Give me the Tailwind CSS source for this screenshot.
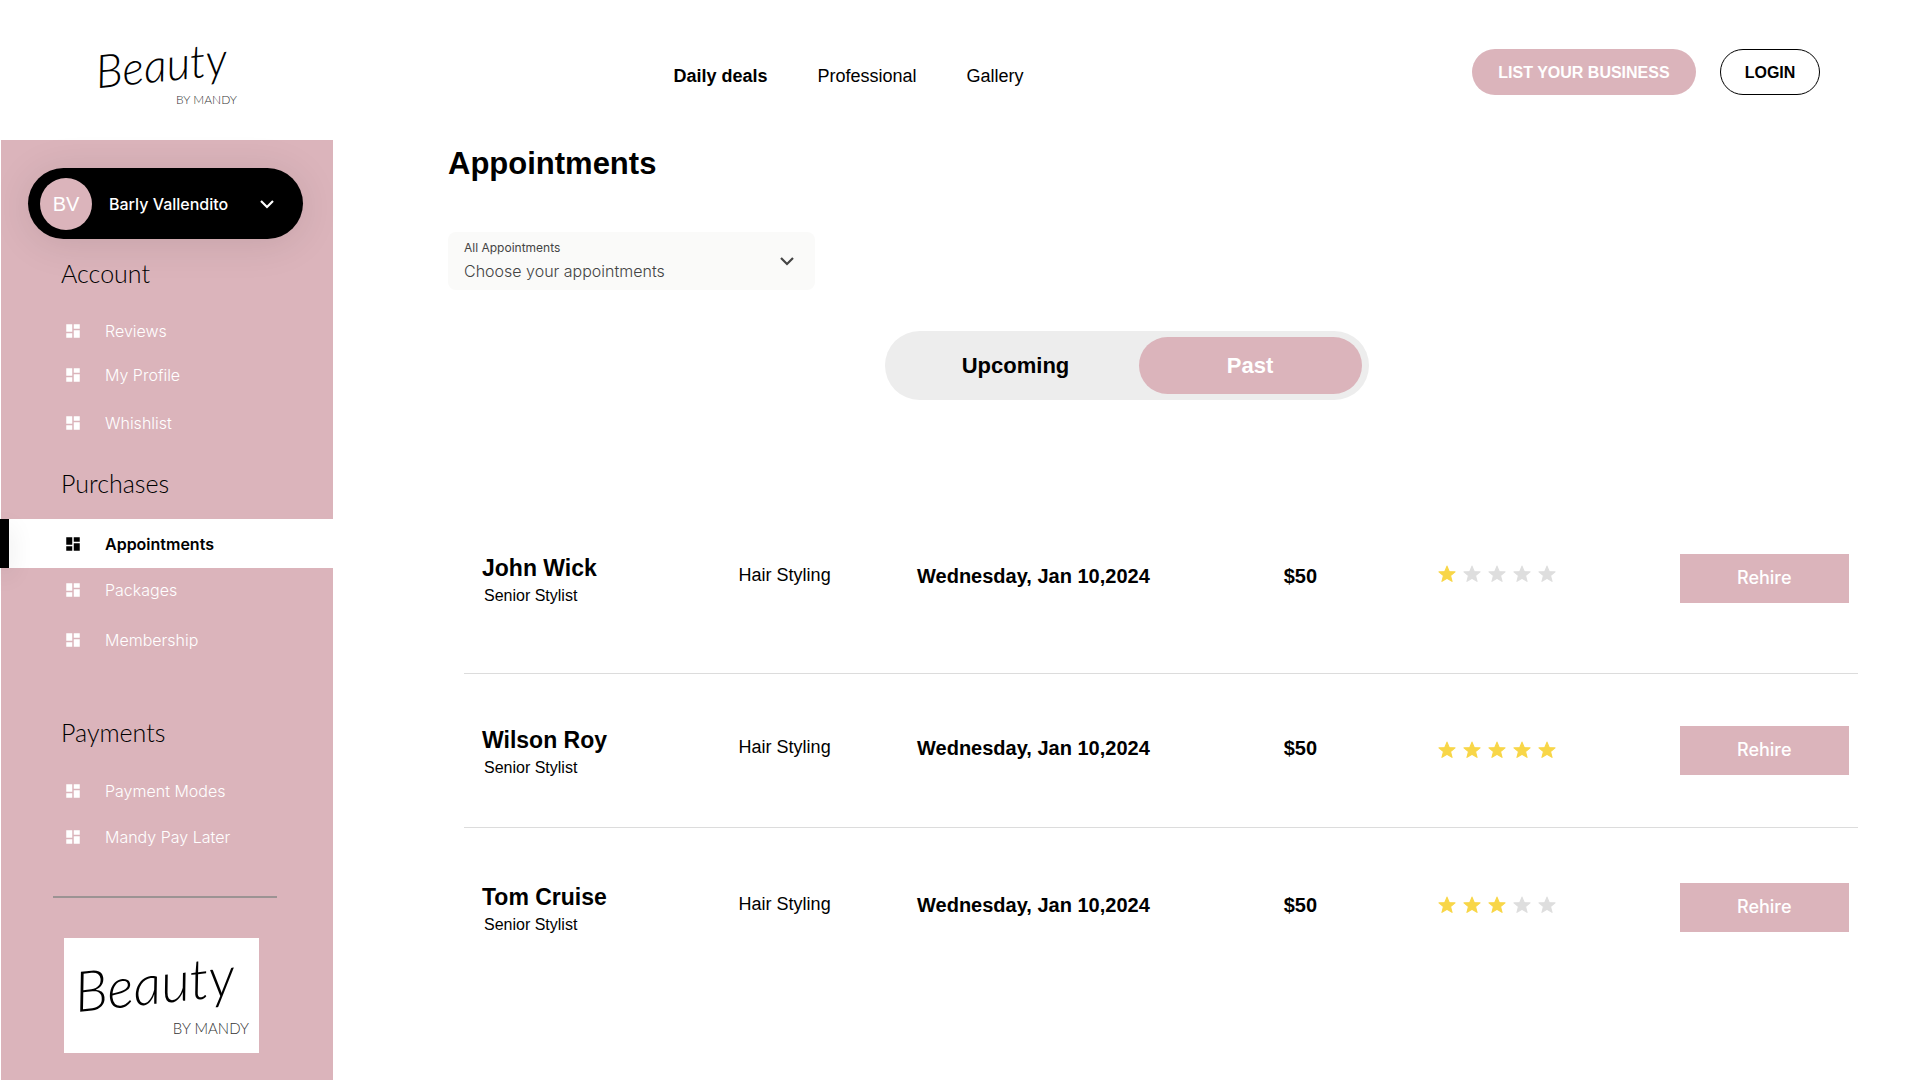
<!DOCTYPE html>
<html lang="en">
<head>
    <meta charset="UTF-8">
    <meta name="viewport" content="width=device-width, initial-scale=1.0">
    <title>Beauty by Mandy - Appointments</title>
    <script src="https://cdn.jsdelivr.net/npm/@tailwindcss/browser@4"></script>
</head>
<body class="min-h-screen flex flex-col bg-white text-black font-['Liberation_Sans',Arial,sans-serif]">
    <!-- Shared icons -->
    <svg class="hidden">
        <symbol id="icon-dashboard" viewBox="0 0 24 24"><path fill="currentColor" d="M3 13h8V3H3v10zm0 8h8v-6H3v6zm10 0h8V11h-8v10zm0-18v6h8V3h-8z"/></symbol>
        <symbol id="icon-chevron" viewBox="0 0 16 16"><path fill="none" stroke="currentColor" stroke-width="2.2" d="M2 5l6 6 6-6"/></symbol>
        <symbol id="icon-star" viewBox="0 0 24 24"><path fill="currentColor" stroke="currentColor" stroke-width="1.5" stroke-linejoin="round" d="M12 1.5l2.9 7.2 7.8.5-6 5 2 7.6L12 17.6l-6.7 4.2 2-7.6-6-5 7.8-.5z"/></symbol>
    </svg>

    <header class="h-[140px] grid grid-cols-[37%_1fr_auto] items-center pr-[100px]">
        <a href="#" class="ml-[95px] w-[142px] flex flex-col">
            <span class="-rotate-6 font-['Lato',cursive] italic font-light text-[46px] leading-[60px]">Beauty</span>
            <span class="self-end font-['Lato',sans-serif] font-light text-xs leading-3 text-[#333]">BY MANDY</span>
        </a>
        <nav class="flex gap-[50px] pt-3 text-lg">
            <a href="#" class="font-bold">Daily deals</a>
            <a href="#">Professional</a>
            <a href="#">Gallery</a>
        </nav>
        <div class="flex gap-6 pt-1">
            <button class="w-[224px] h-[46px] pt-0.5 rounded-full bg-[#dbb4bb] text-white font-bold">LIST YOUR BUSINESS</button>
            <button class="w-[100px] h-[46px] pt-0.5 rounded-full border border-black font-bold">LOGIN</button>
        </div>
    </header>

    <div class="flex-1 flex">
        <aside class="ml-px w-[332px] shrink-0 pt-7 bg-[#dbb4bb] font-['Inter',sans-serif]">
            <button class="ml-[27px] w-[275px] h-[71px] flex items-center rounded-full bg-black text-white pl-3 shadow-[0_4px_40px_rgba(0,0,0,0.1)]">
                <span class="size-[52px] flex items-center justify-center rounded-full bg-[#dbb4bb] font-['Liberation_Sans',sans-serif] text-xl">BV</span>
                <span class="ml-[17px] w-[150px] text-left text-base font-medium">Barly Vallendito</span>
                <svg class="size-4"><use href="#icon-chevron"/></svg>
            </button>

            <h2 class="mt-[18px] mb-5 ml-15 font-['Lato',sans-serif] text-[25px] leading-8 font-light">Account</h2>
            <ul class="text-base font-light text-white">
                <li><a href="#" class="h-11 pl-[63px] flex items-center gap-[23px]"><svg class="size-[18px]"><use href="#icon-dashboard"/></svg>Reviews</a></li>
                <li><a href="#" class="h-11 pl-[63px] flex items-center gap-[23px]"><svg class="size-[18px]"><use href="#icon-dashboard"/></svg>My Profile</a></li>
                <li><a href="#" class="h-13 pl-[63px] flex items-center gap-[23px]"><svg class="size-[18px]"><use href="#icon-dashboard"/></svg>Whishlist</a></li>
            </ul>

            <h2 class="mt-[18px] mb-5 ml-15 font-['Lato',sans-serif] text-[25px] leading-8 font-light">Purchases</h2>
            <ul class="text-base font-light text-white">
                <li class="-ml-px">
                    <a href="#" class="h-[49px] flex items-center bg-white text-black font-semibold">
                        <span class="w-[9px] h-full bg-black shadow-[0_8px_24px_rgba(0,0,0,0.12)]"></span>
                        <svg class="size-[18px] ml-[55px] mr-[23px]"><use href="#icon-dashboard"/></svg>Appointments
                    </a>
                </li>
                <li><a href="#" class="h-11 pl-[63px] flex items-center gap-[23px]"><svg class="size-[18px]"><use href="#icon-dashboard"/></svg>Packages</a></li>
                <li><a href="#" class="h-14 pl-[63px] flex items-center gap-[23px]"><svg class="size-[18px]"><use href="#icon-dashboard"/></svg>Membership</a></li>
            </ul>

            <h2 class="mt-12 mb-5 ml-15 font-['Lato',sans-serif] text-[25px] leading-8 font-light">Payments</h2>
            <ul class="text-base font-light text-white">
                <li><a href="#" class="h-[46px] pl-[63px] flex items-center gap-[23px]"><svg class="size-[18px]"><use href="#icon-dashboard"/></svg>Payment Modes</a></li>
                <li><a href="#" class="h-[46px] pl-[63px] flex items-center gap-[23px]"><svg class="size-[18px]"><use href="#icon-dashboard"/></svg>Mandy Pay Later</a></li>
            </ul>

            <hr class="mt-9 ml-[52px] w-[224px] border-t-2 border-[#9c9393]">

            <a href="#" class="mt-10 ml-[63px] w-[195px] h-[115px] flex flex-col bg-white pl-[10px] pr-[10px] pt-2">
                <span class="-rotate-6 font-['Lato',cursive] italic font-light text-[56px] leading-[72px]">Beauty</span>
                <span class="self-end font-['Lato',sans-serif] font-light text-[15px] leading-5 text-[#333]">BY MANDY</span>
            </a>
        </aside>

        <main class="flex-1 pl-[115px] pr-[62px]">
            <h1 class="pt-1.5 text-[31px] leading-9 font-bold">Appointments</h1>

            <div class="relative mt-[50px] w-[367px] h-[58px] rounded-lg bg-[#fafaf9] text-[#444] font-['Inter',sans-serif]">
                <label for="appointments" class="absolute left-4 top-2 text-xs leading-4">All Appointments</label>
                <select id="appointments" class="size-full appearance-none pl-4 pt-5 text-base font-light">
                    <option>Choose your appointments</option>
                </select>
                <svg class="absolute right-5 top-[21px] size-4 pointer-events-none"><use href="#icon-chevron"/></svg>
            </div>

            <div class="mt-[41px] mr-[53px] flex justify-center">
                <div class="w-[484px] h-[69px] flex items-center rounded-full bg-[#ededed] pr-[7px] text-[22px] font-bold">
                    <button class="flex-1 h-full pl-2">Upcoming</button>
                    <button class="w-[223px] h-[57px] rounded-full bg-[#dbb4bb] text-white">Past</button>
                </div>
            </div>

            <table class="mt-[84px] ml-4 w-[calc(100%-16px)] table-fixed text-left">
                <colgroup>
                    <col class="w-[19.7%]">
                    <col class="w-[12.8%]">
                    <col class="w-[26.3%]">
                    <col class="w-[11.1%]">
                    <col class="w-[17.3%]">
                    <col class="w-[12.8%]">
                </colgroup>
                <tbody>
                    <tr class="h-[189px] border-b border-[#dcdcdc]">
                        <td class="pl-[18px] pt-2">
                            <p class="text-[23px] leading-7 font-bold">John Wick</p>
                            <p class="pl-0.5 text-base leading-7">Senior Stylist</p>
                        </td>
                        <td class="pb-1.5 text-lg">Hair Styling</td>
                        <td class="pb-1 text-xl font-bold">Wednesday, Jan 10,2024</td>
                        <td class="pb-1 text-xl font-bold">$50</td>
                        <td class="pb-2">
                            <div class="flex gap-[7px] text-[#dedede]" role="img" aria-label="1 of 5 stars">
                                <svg class="size-[18px] text-[#f8d648]"><use href="#icon-star"/></svg>
                                <svg class="size-[18px]"><use href="#icon-star"/></svg>
                                <svg class="size-[18px]"><use href="#icon-star"/></svg>
                                <svg class="size-[18px]"><use href="#icon-star"/></svg>
                                <svg class="size-[18px]"><use href="#icon-star"/></svg>
                            </div>
                        </td>
                        <td class="pr-[9px]"><button class="w-full h-[49px] bg-[#dbb4bb] text-white font-['Inter',sans-serif] text-lg font-medium">Rehire</button></td>
                    </tr>
                    <tr class="h-[154px] border-b border-[#dcdcdc]">
                        <td class="pl-[18px] pt-2">
                            <p class="text-[23px] leading-7 font-bold">Wilson Roy</p>
                            <p class="pl-0.5 text-base leading-7">Senior Stylist</p>
                        </td>
                        <td class="pb-1.5 text-lg">Hair Styling</td>
                        <td class="pb-1 text-xl font-bold">Wednesday, Jan 10,2024</td>
                        <td class="pb-1 text-xl font-bold">$50</td>
                        <td>
                            <div class="flex gap-[7px] text-[#f8d648]" role="img" aria-label="5 of 5 stars">
                                <svg class="size-[18px]"><use href="#icon-star"/></svg>
                                <svg class="size-[18px]"><use href="#icon-star"/></svg>
                                <svg class="size-[18px]"><use href="#icon-star"/></svg>
                                <svg class="size-[18px]"><use href="#icon-star"/></svg>
                                <svg class="size-[18px]"><use href="#icon-star"/></svg>
                            </div>
                        </td>
                        <td class="pr-[9px]"><button class="w-full h-[49px] bg-[#dbb4bb] text-white font-['Inter',sans-serif] text-lg font-medium">Rehire</button></td>
                    </tr>
                    <tr class="h-[160px]">
                        <td class="pl-[18px] pt-2">
                            <p class="text-[23px] leading-7 font-bold">Tom Cruise</p>
                            <p class="pl-0.5 text-base leading-7">Senior Stylist</p>
                        </td>
                        <td class="pb-1.5 text-lg">Hair Styling</td>
                        <td class="pb-1 text-xl font-bold">Wednesday, Jan 10,2024</td>
                        <td class="pb-1 text-xl font-bold">$50</td>
                        <td class="pb-1">
                            <div class="flex gap-[7px] text-[#f8d648]" role="img" aria-label="3 of 5 stars">
                                <svg class="size-[18px]"><use href="#icon-star"/></svg>
                                <svg class="size-[18px]"><use href="#icon-star"/></svg>
                                <svg class="size-[18px]"><use href="#icon-star"/></svg>
                                <svg class="size-[18px] text-[#dedede]"><use href="#icon-star"/></svg>
                                <svg class="size-[18px] text-[#dedede]"><use href="#icon-star"/></svg>
                            </div>
                        </td>
                        <td class="pr-[9px]"><button class="w-full h-[49px] bg-[#dbb4bb] text-white font-['Inter',sans-serif] text-lg font-medium">Rehire</button></td>
                    </tr>
                </tbody>
            </table>
        </main>
    </div>
</body>
</html>
